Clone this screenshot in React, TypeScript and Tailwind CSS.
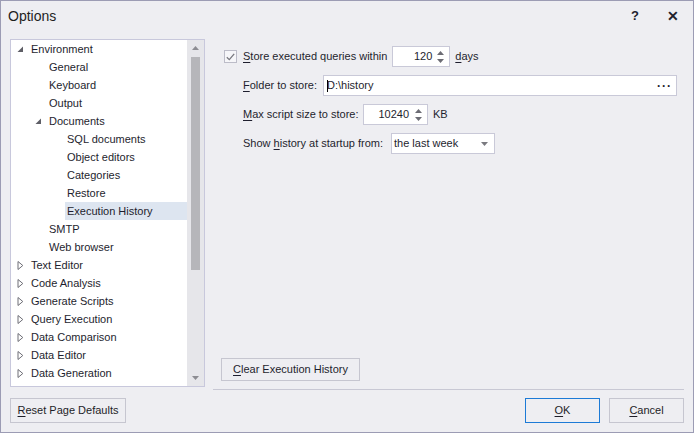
import React from "react";

type Node = { label: string; level: 0 | 1 | 2; exp?: "open" | "closed"; selected?: boolean };

const tree: Node[] = [
  { label: "Environment", level: 0, exp: "open" },
  { label: "General", level: 1 },
  { label: "Keyboard", level: 1 },
  { label: "Output", level: 1 },
  { label: "Documents", level: 1, exp: "open" },
  { label: "SQL documents", level: 2 },
  { label: "Object editors", level: 2 },
  { label: "Categories", level: 2 },
  { label: "Restore", level: 2 },
  { label: "Execution History", level: 2, selected: true },
  { label: "SMTP", level: 1 },
  { label: "Web browser", level: 1 },
  { label: "Text Editor", level: 0, exp: "closed" },
  { label: "Code Analysis", level: 0, exp: "closed" },
  { label: "Generate Scripts", level: 0, exp: "closed" },
  { label: "Query Execution", level: 0, exp: "closed" },
  { label: "Data Comparison", level: 0, exp: "closed" },
  { label: "Data Editor", level: 0, exp: "closed" },
  { label: "Data Generation", level: 0, exp: "closed" },
];

const indent = ["w-0", "w-[18px]", "w-[36px]"];

// small triangles used by the tree, spin boxes and scrollbar
const Expander = ({ exp }: { exp?: "open" | "closed" }) => (
  <div className="flex h-[18px] w-[18px] shrink-0 items-center pl-[6px]">
    {exp === "open" && (
      <svg width="7" height="7" viewBox="0 0 7 7">
        <path d="M6 0.5 L6 6 L0.5 6 Z" fill="#5e5e66" />
      </svg>
    )}
    {exp === "closed" && (
      <svg width="7" height="9" viewBox="0 0 7 9">
        <path d="M1 0.5 L5.8 4.5 L1 8.5 Z" fill="none" stroke="#6e6e76" strokeWidth="1" />
      </svg>
    )}
  </div>
);

const Up = ({ c = "#6c6c74" }: { c?: string }) => (
  <svg width="7" height="4" viewBox="0 0 7 4">
    <path d="M3.5 0 L7 4 L0 4 Z" fill={c} />
  </svg>
);

const Down = ({ c = "#6c6c74" }: { c?: string }) => (
  <svg width="7" height="4" viewBox="0 0 7 4">
    <path d="M0 0 L7 0 L3.5 4 Z" fill={c} />
  </svg>
);

const Spin = ({ value, box, pad }: { value: string; box: string; pad: string }) => (
  <div className={`flex h-[21px] items-center border border-[#c9c9d8] bg-white ${box}`}>
    <span className={`flex-1 text-right ${pad}`}>{value}</span>
    <div className="flex w-[14px] flex-col items-center gap-[4px] pr-[3px]">
      <Up />
      <Down />
    </div>
  </div>
);

const Btn = ({ children, box, focus }: { children: React.ReactNode; box: string; focus?: boolean }) => (
  <button
    className={`flex h-[25px] items-center justify-center border bg-[#eeeef2] text-[#1e1e28] ${box} ${
      focus ? "border-[#1c7ad6]" : "border-[#c6c6d0]"
    }`}
  >
    {children}
  </button>
);

export default function App() {
  return (
    <div className="flex h-[433px] w-[694px] flex-col border border-[#9c9cb4] bg-[#eeeef2] font-['Liberation_Sans',Arial,sans-serif] text-[11px] text-[#1e1e2e]">
      {/* Title bar */}
      <div className="flex h-[38px] items-start pt-[6px] pl-[7px]">
        <span className="text-[14px] leading-[18px] text-[#1e1e1e]">Options</span>
        <span className="ml-auto mr-[28px] text-[13px] font-bold leading-[18px]">?</span>
        <span className="mr-[14px] text-[14px] font-bold leading-[18px]">✕</span>
      </div>

      <div className="flex flex-1">
        {/* Left: tree + reset */}
        <div className="flex w-[212px] flex-col pl-[9px]">
          <div className="flex h-[348px] w-[195px] border border-[#c8c8dc] bg-white">
            <div className="flex flex-1 flex-col overflow-hidden">
              {tree.map((n) => (
                <div key={n.label} className="flex h-[18px] shrink-0 items-center">
                  <div className={`shrink-0 ${indent[n.level]}`} />
                  <Expander exp={n.exp} />
                  <div
                    className={`flex h-[18px] flex-1 items-center whitespace-nowrap pl-[2px] ${
                      n.selected ? "bg-[#dde5f0]" : ""
                    }`}
                  >
                    {n.label}
                  </div>
                </div>
              ))}
            </div>
            {/* scrollbar */}
            <div className="flex w-[17px] flex-col items-center bg-[#e6e6ea] pt-[6px] pb-[6px]">
              <Up c="#8c8c92" />
              <div className="mt-[7px] h-[213px] w-[9px] bg-[#b6b6ba]" />
              <div className="mt-auto">
                <Down c="#8c8c92" />
              </div>
            </div>
          </div>
          <div className="mt-[11px]">
            <Btn box="w-[116px]">
              <span>
                <u className="underline-offset-2">R</u>eset Page Defaults
              </span>
            </Btn>
          </div>
        </div>

        {/* Right: options page */}
        <div className="flex flex-1 flex-col pr-[9px] pb-[9px]">
          <div className="flex flex-col gap-[8px] pt-[7px] pl-[11px]">
            <div className="flex h-[21px] items-center">
              <div className="flex h-[13px] w-[13px] items-center justify-center border border-[#bcbcc8] bg-[#f6f6f9]">
                <svg width="9" height="8" viewBox="0 0 9 8">
                  <path d="M0.8 4.2 L3.3 6.6 L8.2 0.8" fill="none" stroke="#77777e" strokeWidth="1.3" />
                </svg>
              </div>
              <span className="ml-[6px]">
                <u className="underline-offset-2">S</u>tore executed queries within
              </span>
              <div className="ml-[5px]">
                <Spin value="120" box="w-[58px]" pad="pr-[3px]" />
              </div>
              <span className="ml-[5px]">
                <u className="underline-offset-2">d</u>ays
              </span>
            </div>

            <div className="flex h-[21px] items-center pl-[19px]">
              <span className="w-[80px] shrink-0">
                <u className="underline-offset-2">F</u>older to store:
              </span>
              <div className="relative mr-[7px] flex h-[21px] flex-1 items-center border border-[#c9c9d8] bg-white pl-[3px] pr-[4px]">
                <span className="absolute left-[3px] top-[4px] h-[12px] w-px bg-black" />
                <span>D:\history</span>
                <span className="ml-auto text-[12px] font-bold leading-none tracking-[1px]">···</span>
              </div>
            </div>

            <div className="flex h-[21px] items-center pl-[19px]">
              <span className="w-[120px] shrink-0">
                <u className="underline-offset-2">M</u>ax script size to store:
              </span>
              <Spin value="10240" box="w-[65px]" pad="pr-[4px]" />
              <span className="ml-[5px]">KB</span>
            </div>

            <div className="flex h-[21px] items-center pl-[19px]">
              <span className="w-[148px] shrink-0">
                Show <u className="underline-offset-2">h</u>istory at startup from:
              </span>
              <div className="flex h-[21px] w-[104px] items-center border border-[#c9c9d8] bg-white pl-[2px] pr-[6px]">
                <span>the last week</span>
                <span className="ml-auto">
                  <Down c="#7a7a80" />
                </span>
              </div>
            </div>
          </div>

          <div className="mt-auto pl-[8px]">
            <button className="flex h-[23px] w-[139px] items-center justify-center border border-[#c6c6d0] bg-[#eeeef2]">
              <span>
                <u className="underline-offset-2">C</u>lear Execution History
              </span>
            </button>
          </div>
          <div className="mt-[8px] h-px bg-[#c8c8d4]" />
          <div className="mt-[8px] flex justify-end gap-[9px]">
            <Btn box="w-[75px]" focus>
              <span>
                <u className="underline-offset-2">O</u>K
              </span>
            </Btn>
            <Btn box="w-[75px]">
              <span>
                <u className="underline-offset-2">C</u>ancel
              </span>
            </Btn>
          </div>
        </div>
      </div>
    </div>
  );
}
